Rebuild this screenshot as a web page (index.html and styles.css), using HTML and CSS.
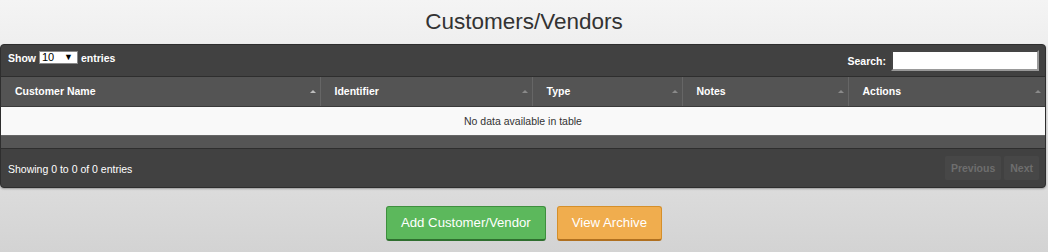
FILE: index.html
```html
<!DOCTYPE html>
<html>
<head>
<link rel="stylesheet" href="styles.css">
</head>
<body>

<h1 class="page-title">Customers/Vendors</h1>

<div class="table-wrapper">
    <div class="toolbar">
        <label class="length">Show
            <span class="select-box"><select><option>10</option><option>25</option><option>50</option></select></span>
            entries</label>
        <label class="search">Search: <input type="text"></label>
    </div>
    <table class="data-table">
        <thead>
            <tr>
                <th class="sorted col-name">Customer Name</th>
                <th class="col-id">Identifier</th>
                <th class="col-type">Type</th>
                <th class="col-notes">Notes</th>
                <th>Actions</th>
            </tr>
        </thead>
        <tbody>
            <tr><td colspan="5" class="empty">No data available in table</td></tr>
        </tbody>
    </table>
    <div class="table-bottom"></div>
    <div class="footer">
        <div class="info">Showing 0 to 0 of 0 entries</div>
        <div class="paging">
            <span class="page-btn">Previous</span>
            <span class="page-btn">Next</span>
        </div>
    </div>
</div>

<div class="actions">
    <button class="btn btn-green">Add Customer/Vendor</button>
    <button class="btn btn-orange">View Archive</button>
</div>

</body>
</html>
```

FILE: styles.css
```css
html {
    height: 100%;
}

body {
    margin: 0;
    min-height: 100%;
    background: linear-gradient(to bottom, #f4f4f4 0%, #e6e6e6 45%, #d3d3d3 100%);
    font-family: "Liberation Sans", Arial, sans-serif;
    color: #333;
}

.page-title {
    margin: 0;
    padding: 8px 0;
    font-size: 22.5px;
    line-height: 28px;
    font-weight: normal;
    text-align: center;
    color: #333;
}

.table-wrapper {
    margin-right: 2px;
    border: 1px solid #2e2e2e;
    border-radius: 4px;
    background-color: #414141;
    overflow: hidden;
    box-shadow: 0 1px 2px rgba(0, 0, 0, 0.3);
}

.toolbar {
    display: flex;
    justify-content: space-between;
    align-items: center;
    height: 31px;
    padding: 0 6px 0 7px;
    font-size: 10.5px;
    font-weight: bold;
    color: #fff;
    border-bottom: 1px solid #2e2e2e;
}

.length {
    display: flex;
    align-items: center;
    gap: 3px;
    margin-top: -6px;
}

.select-box {
    position: relative;
    display: inline-block;
}

.select-box select {
    appearance: none;
    -webkit-appearance: none;
    width: 39px;
    height: 13px;
    padding: 0 0 0 2px;
    border: 1px solid #888;
    border-radius: 0;
    background: #fff;
    font-family: "Liberation Sans", Arial, sans-serif;
    font-size: 11px;
    line-height: 11px;
    color: #000;
}

.select-box::after {
    content: "\25BC";
    position: absolute;
    right: 5px;
    top: 0;
    font-size: 9px;
    line-height: 13px;
    color: #000;
    pointer-events: none;
}

.search {
    display: flex;
    align-items: center;
    gap: 5px;
}

.search input {
    width: 140px;
    height: 15px;
    padding: 1px 2px;
    border: 2px solid #999;
    border-style: inset;
    background: #fff;
}

.data-table {
    width: 100%;
    table-layout: fixed;
    border-collapse: collapse;
    font-size: 10.5px;
}

.data-table th {
    position: relative;
    box-sizing: border-box;
    height: 29px;
    padding: 0 14px;
    background-color: #545454;
    color: #fff;
    font-weight: bold;
    text-align: left;
    border-left: 1px solid #666;
    border-bottom: 1px solid #3a3a3a;
}

.col-name {
    width: 319px;
}

.col-id {
    width: 212px;
}

.col-type {
    width: 150px;
}

.col-notes {
    width: 166px;
}

.data-table th:first-child {
    border-left: none;
}

.data-table th::after {
    content: "";
    position: absolute;
    right: 4px;
    top: 13px;
    border-left: 3px solid transparent;
    border-right: 3px solid transparent;
    border-bottom: 3px solid #8a8a8a;
}

.data-table th.sorted::after {
    border-bottom-color: #bdbdbd;
}

.empty {
    height: 28px;
    padding: 0;
    background-color: #f9f9f9;
    text-align: center;
    color: #333;
}

.table-bottom {
    height: 12px;
    background-color: #555;
    border-top: 1px solid #666;
    border-bottom: 1px solid #2e2e2e;
}

.footer {
    display: flex;
    justify-content: space-between;
    align-items: center;
    height: 38px;
    padding: 0 6px 0 7px;
    font-size: 10.5px;
    color: #fff;
}

.info {
    margin-top: 2px;
}

.paging {
    display: flex;
    gap: 3px;
}

.page-btn {
    display: inline-block;
    height: 24px;
    line-height: 24px;
    padding: 0 6px;
    border-radius: 2px;
    background-color: #474747;
    color: #6e6e6e;
    font-weight: bold;
}

.actions {
    display: flex;
    justify-content: center;
    gap: 11px;
    margin-top: 18px;
}

.btn {
    height: 35px;
    padding: 0 14px;
    border-radius: 3px;
    font-family: "Liberation Sans", Arial, sans-serif;
    font-size: 13.2px;
    color: #fff;
    cursor: pointer;
}

.btn-green {
    background-color: #5cb85c;
    border: 1px solid #3e8f3e;
    border-bottom: 2px solid #2f6f2f;
}

.btn-orange {
    background-color: #f0ad4e;
    border: 1px solid #d58f2a;
    border-bottom: 2px solid #b07020;
}
```
